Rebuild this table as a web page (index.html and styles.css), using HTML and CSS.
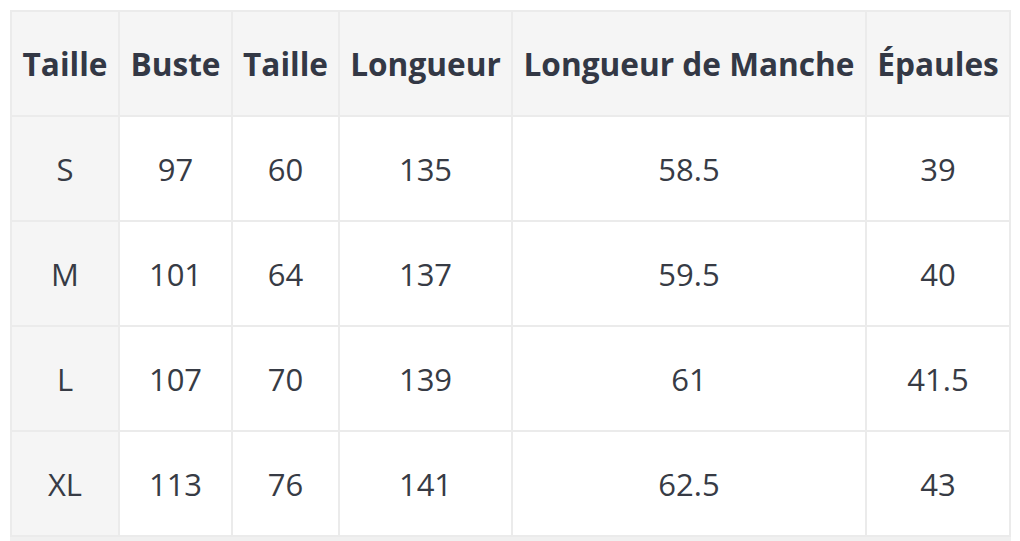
FILE: index.html
```html
<!DOCTYPE html>
<html lang="fr">
<head>
<meta charset="utf-8">
<title>Tableau des tailles</title>
<link rel="stylesheet" href="styles.css">
</head>
<body>
<div class="wrap">
  <table class="sizes">
    <colgroup>
      <col class="c1"><col class="c2"><col class="c3"><col class="c4"><col class="c5"><col class="c6">
    </colgroup>
    <thead>
      <tr><th>Taille</th><th>Buste</th><th>Taille</th><th>Longueur</th><th>Longueur de Manche</th><th>Épaules</th></tr>
    </thead>
    <tbody>
      <tr><td class="first">S</td><td>97</td><td>60</td><td>135</td><td>58.5</td><td>39</td></tr>
      <tr><td class="first">M</td><td>101</td><td>64</td><td>137</td><td>59.5</td><td>40</td></tr>
      <tr><td class="first">L</td><td>107</td><td>70</td><td>139</td><td>61</td><td>41.5</td></tr>
      <tr><td class="first">XL</td><td>113</td><td>76</td><td>141</td><td>62.5</td><td>43</td></tr>
    </tbody>
  </table>
  <div class="track"></div>
</div>
</body>
</html>
```
FILE: styles.css
```css
html, body { margin: 0; padding: 0; background: #fff; }
body { padding: 10px; font-family: "Open Sans", "Noto Sans", sans-serif; color: #363a44; }
.wrap { width: 1001px; }
.sizes {
  border-collapse: separate;
  border-spacing: 0;
  table-layout: fixed;
  width: 1001px;
  border-right: 2px solid #ebebeb;
  border-bottom: 2px solid #ebebeb;
}
.c1 { width: 108px; } .c2 { width: 113px; } .c3 { width: 107px; }
.c4 { width: 173px; } .c5 { width: 354px; } .c6 { width: 144px; }
.sizes th, .sizes td {
  box-sizing: border-box;
  height: 105px;
  padding: 0;
  border-left: 2px solid #ebebeb;
  border-top: 2px solid #ebebeb;
  text-align: center;
  vertical-align: middle;
  white-space: nowrap;
}
.sizes th { background: #f5f5f5; font-weight: 700; font-size: 31.6px; color: #333845; }
.sizes td { font-size: 31px; font-weight: 400; color: #373b45; }
.sizes td.first { background: #f5f5f5; }
.track { height: 5px; background: #f0f0f0; }
```
